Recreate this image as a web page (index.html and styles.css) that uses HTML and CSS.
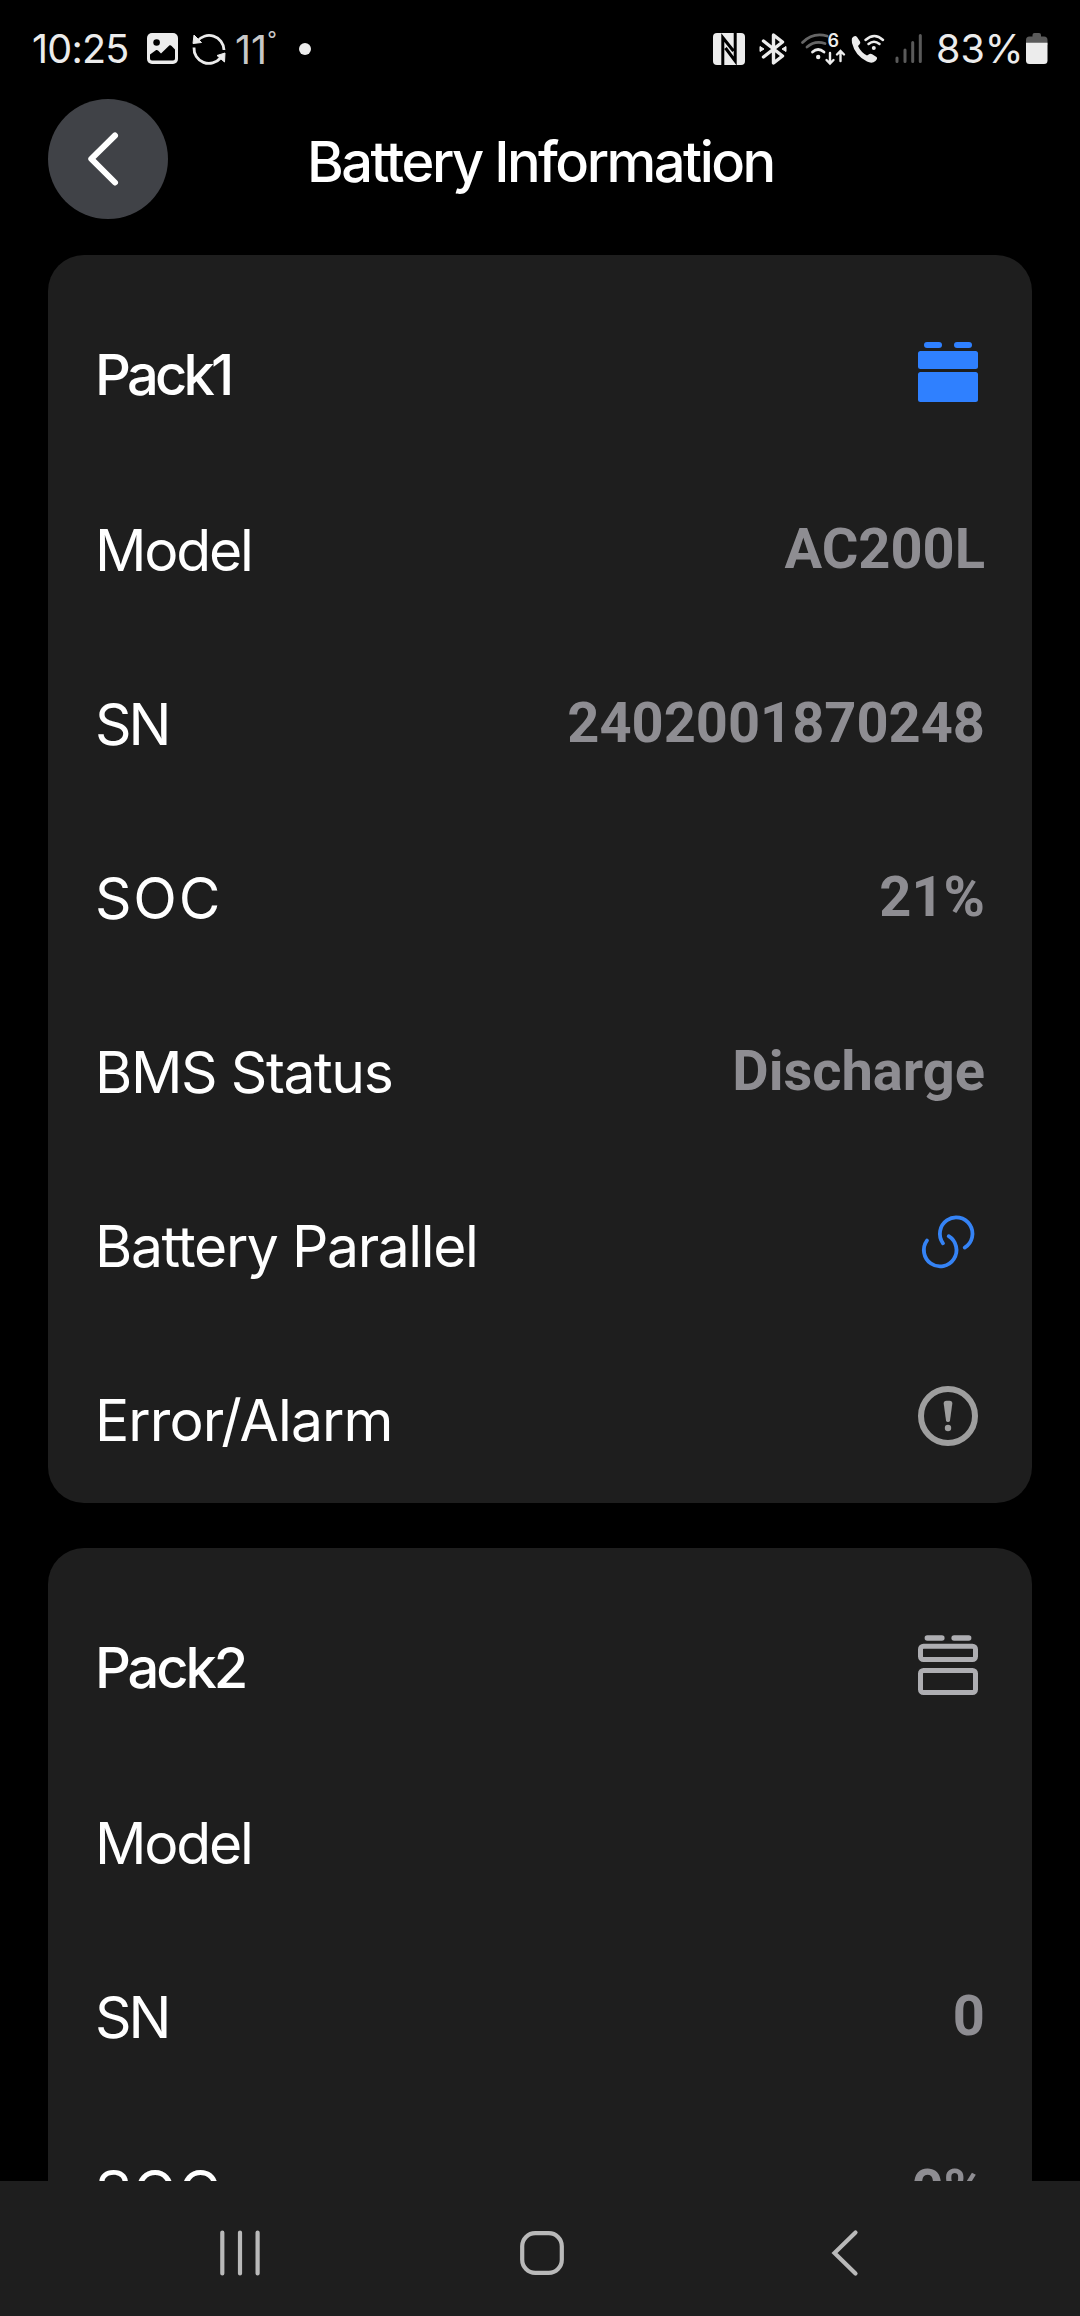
FILE: index.html
```html
<!DOCTYPE html>
<html lang="en">
<head>
<meta charset="utf-8">
<title>Battery Information</title>
<link rel="stylesheet" href="styles.css">
</head>
<body>
<div class="screen">
  <div class="statusbar">
    <div class="status-left">
      <span class="time">10:25</span>
      <svg class="i-photo" width="31" height="31" viewBox="0 0 31 31">
        <rect width="31" height="31" rx="5" fill="#ececec"/>
        <circle cx="9.600" cy="9.500" r="3.300" fill="#000"/>
        <path d="M3 21.500L8.500 17.500C9.500 16.800 10.500 17 11.300 17.800L14 20.500L22 12.800C22.800 12.200 23.800 12.200 24.600 13L28 16.500V25.500Q28 27.500 26 27.500H5Q3 27.500 3 25.500Z" fill="#000"/>
      </svg>
      <svg class="i-sync" width="34" height="34" viewBox="0 0 34 34">
        <g fill="none" stroke="#ececec" stroke-width="2.800">
          <path d="M5 9.500A15 15 0 0 1 32 18"/>
          <path d="M2 15.500A15 15 0 0 0 28.500 26"/>
        </g>
        <path d="M2 3L1 11.500L9.500 10.500ZM25 23.500L33 21L32.500 30Z" fill="#ececec" stroke="#ececec"/>
      </svg>
      <span class="temp">11<span class="degree">°</span></span>
      <span class="dot"></span>
    </div>
    <div class="status-right">
      <svg width="32" height="32" viewBox="0 0 32 32">
        <rect width="32" height="32" rx="4" fill="#ececec"/>
        <path d="M9.800 32V4.500L20.500 18M22.200 0V28L12.500 15" fill="none" stroke="#000" stroke-width="3"/>
      </svg>
      <svg class="i-bt" width="28" height="32" viewBox="0 0 28 32">
        <path d="M4.500 8L23.500 23L14.500 30V2L23.500 9L4.500 24" fill="none" stroke="#ececec" stroke-width="3.400" stroke-linecap="round" stroke-linejoin="round"/>
        <path d="M1 13.500L5 16L1 18.500ZM27 13.500L23 16L27 18.500Z" fill="#ececec" stroke="#ececec"/>
      </svg>
      <svg class="i-wifi" width="46" height="32" viewBox="0 0 46 32">
        <g fill="none" stroke="#666" stroke-width="2.800" stroke-linecap="round">
          <path d="M2.500 9.500Q13 -1 27 3"/>
          <path d="M7 14Q15 7 25 10.500"/>
        </g>
        <g fill="none" stroke="#ececec" stroke-width="2.800" stroke-linecap="round">
          <path d="M12.500 19Q18 14 24 19"/>
          <path d="M30 20V30M26.500 27L30 30.500L33.500 27M40.500 28V18.500M37 21.500L40.500 18L44 21.500" stroke-width="2.400"/>
        </g>
        <circle cx="18.200" cy="24" r="2.200" fill="#ececec"/>
        <text class="wifi-gen" x="27.500" y="14">6</text>
      </svg>
      <svg class="i-call" width="34" height="32" viewBox="0 0 34 32">
        <path d="M1 5Q4 1.500 6 4L9 8.500Q9.800 10 8.600 11.200L7 13Q10 19.500 16 22.500L18.500 21Q20 20.500 21.200 21.300L25.500 24Q27 25.500 24.500 28Q21 31 16 28.500Q4 22.500 1 10Q.500 7 1 5Z" fill="#ececec"/>
        <g fill="none" stroke="#ececec" stroke-width="2.500" stroke-linecap="round">
          <path d="M14.500 7Q23.500 -1 32 7"/>
          <path d="M17.500 11Q23 6.500 28.500 11"/>
        </g>
        <circle cx="22.800" cy="15" r="2" fill="#ececec"/>
      </svg>
      <svg class="i-signal" width="28" height="32" viewBox="0 0 28 32">
        <path d="M2 25V28.500M10 17V28.500M17.700 9.500V28.500M25.300 2.500V28.500" stroke="#5a5a5a" stroke-width="3" stroke-linecap="round"/>
      </svg>
      <span class="percent">83%</span>
      <svg class="i-batt" width="22" height="32" viewBox="0 0 22 32">
        <path d="M6.500 2Q6.500 0 8.500 0H13Q15 0 15 2V3.500H18Q21.500 3.500 21.500 7V12H0V7Q0 3.500 3.500 3.500H6.500Z" fill="#5a5a5a"/>
        <path d="M0 9.700H21.500V27.500Q21.500 31 18 31H3.500Q0 31 0 27.500Z" fill="#ececec"/>
      </svg>
    </div>
  </div>

  <header class="header">
    <div class="back">
      <svg width="120" height="120" viewBox="0 0 120 120"><path d="M67 36.500L43.300 59.800L67 83.500" fill="none" stroke="#fff" stroke-width="6" stroke-linecap="round" stroke-linejoin="round"/></svg>
    </div>
    <h1 class="title">Battery Information</h1>
  </header>

  <main class="content">
    <section class="card">
      <div class="row"><span class="name name-first">Pack1</span>
        <svg class="icon" width="60" height="60" viewBox="0 0 60 60" fill="#2f80ff"><rect x="6" width="18" height="6" rx="3"/><rect x="36" width="18" height="6" rx="3"/><rect y="9" width="60" height="18" rx="2.500"/><rect y="30" width="60" height="30" rx="2.500"/></svg>
      </div>
      <div class="row"><span class="label label-model">Model</span><span class="value">AC200L</span></div>
      <div class="row"><span class="label label-sn">SN</span><span class="value">2402001870248</span></div>
      <div class="row"><span class="label label-soc">SOC</span><span class="value">21%</span></div>
      <div class="row"><span class="label label-long">BMS Status</span><span class="value">Discharge</span></div>
      <div class="row"><span class="label label-long">Battery Parallel</span>
        <svg class="icon" width="60" height="60" viewBox="0 0 60 60" fill="none" stroke="#3583f5" stroke-width="3.800" stroke-linecap="round"><path d="M25 31.300A16.300 16.300 0 1 1 46.700 35.600"/><path d="M9 28.500A16.300 16.300 0 1 0 30.700 24.200"/></svg>
      </div>
      <div class="row"><span class="label label-alarm">Error/Alarm</span>
        <svg class="icon" width="60" height="60" viewBox="0 0 60 60" fill="#9e9e9e"><circle cx="30" cy="30" r="27" fill="none" stroke="#9e9e9e" stroke-width="6"/><path d="M25.700 17.500Q25.700 14.800 28.300 14.800H31.700Q34.300 14.800 34.300 17.500L32 34.500Q31.700 36 30 36Q28.300 36 28 34.500Z"/><circle cx="30" cy="42" r="3.200"/></svg>
      </div>
    </section>
    <section class="card">
      <div class="row"><span class="name">Pack2</span>
        <svg class="icon" width="60" height="60" viewBox="0 0 60 60"><g fill="#aeaeb2"><rect x="6.600" y=".300" width="20" height="5.400" rx="2.700"/><rect x="33.400" y=".300" width="20" height="5.400" rx="2.700"/></g><g fill="none" stroke="#aeaeb2" stroke-width="5"><rect x="2.500" y="11.200" width="55" height="13.300" rx="3"/><rect x="2.500" y="35.500" width="55" height="22" rx="3"/></g></svg>
      </div>
      <div class="row"><span class="label label-model">Model</span></div>
      <div class="row"><span class="label label-sn">SN</span><span class="value">0</span></div>
      <div class="row"><span class="label label-soc">SOC</span><span class="value">0%</span></div>
    </section>
  </main>

  <nav class="navbar">
    <svg width="60" height="60" viewBox="0 0 60 60"><path d="M12.300 10.500V51.500M30 10.500V51.500M47.600 10.500V51.500" stroke="#b9b9b9" stroke-width="4.200" stroke-linecap="round"/></svg>
    <svg width="60" height="60" viewBox="0 0 60 60"><rect x="10.200" y="11.200" width="39.600" height="39.600" rx="13" fill="none" stroke="#b9b9b9" stroke-width="4.200"/></svg>
    <svg width="60" height="60" viewBox="0 0 60 60"><path d="M41.500 10.500L20.500 31L41.500 51.500" fill="none" stroke="#b9b9b9" stroke-width="4.200" stroke-linecap="round"/></svg>
  </nav>
</div>
</body>
</html>
```
FILE: styles.css
```css
* { box-sizing: border-box; margin: 0; }
body { background: #000; }
svg { display: block; flex: none; overflow: visible; }

.screen {
  display: flex;
  flex-direction: column;
  width: 1080px;
  height: 2316px;
  overflow: hidden;
  background: #000;
  color: #fff;
  font-family: Inter, "Liberation Sans", sans-serif;
}

/* Status bar */
.statusbar {
  display: flex;
  justify-content: space-between;
  flex: none;
  height: 97px;
  padding: 0 32px;
  color: #ececec;
  font-size: 39.5px;
  font-weight: 400;
  line-height: 96px;
  white-space: nowrap;
}
.status-left, .status-right { display: flex; align-items: center; }
.time { width: 115px; letter-spacing: -0.8px; }
.i-photo { margin-right: 14px; }
.temp { display: flex; width: 73px; padding: 2px 0 0 9px; color: #c8c8c8; }
.degree { font-size: 21px; line-height: 76px; }
.dot { width: 12px; height: 12px; border-radius: 50%; background: #ececec; }
.i-bt { margin-left: 14px; }
.i-wifi { margin-left: 13px; }
.i-call { margin-left: 5px; }
.i-signal { margin-left: 10px; }
.wifi-gen { fill: #ececec; font-size: 18px; font-weight: 600; }
.percent { width: 90px; margin-left: 13px; }

/* Page header */
.header {
  display: flex;
  flex: none;
  height: 158px;
  padding: 2px 48px 0;
}
.back { flex: none; width: 120px; height: 120px; border-radius: 50%; background: #404247; }
.title {
  margin-left: 139px;
  font-size: 56px;
  font-weight: 500;
  line-height: 127px;
  letter-spacing: -2.5px;
  white-space: nowrap;
}

/* Battery packs */
.content {
  display: flex;
  flex: 1;
  flex-direction: column;
  gap: 45px;
  min-height: 0;
  padding: 0 48px;
  overflow: hidden;
}
.card {
  flex: none;
  padding: 30px 48px 0 47px;
  border-radius: 36px;
  background: #1e1e1e;
}
.row {
  display: flex;
  align-items: center;
  justify-content: space-between;
  height: 174px;
  white-space: nowrap;
}
.name { padding-top: 5px; font-size: 56px; font-weight: 500; letter-spacing: -3.1px; }
.name-first { letter-spacing: -3.8px; }
.label { padding-top: 9px; font-size: 57px; font-weight: 400; }
.label-model { letter-spacing: -2.2px; }
.label-sn { letter-spacing: -3px; }
.label-soc { letter-spacing: 1.8px; }
.label-long { letter-spacing: -1.4px; }
.label-alarm { letter-spacing: -0.9px; }
.value { padding-top: 5px; margin-right: -1px; color: #8e8d92; font-family: Roboto, sans-serif; font-size: 56px; font-weight: 700; }
.icon { margin-right: 6px; }

/* System navigation */
.navbar {
  display: grid;
  grid-template-columns: repeat(3, 302px);
  justify-content: center;
  justify-items: center;
  flex: none;
  height: 135px;
  padding: 41px 0 0 4px;
  background: #1e1e1e;
}
```
